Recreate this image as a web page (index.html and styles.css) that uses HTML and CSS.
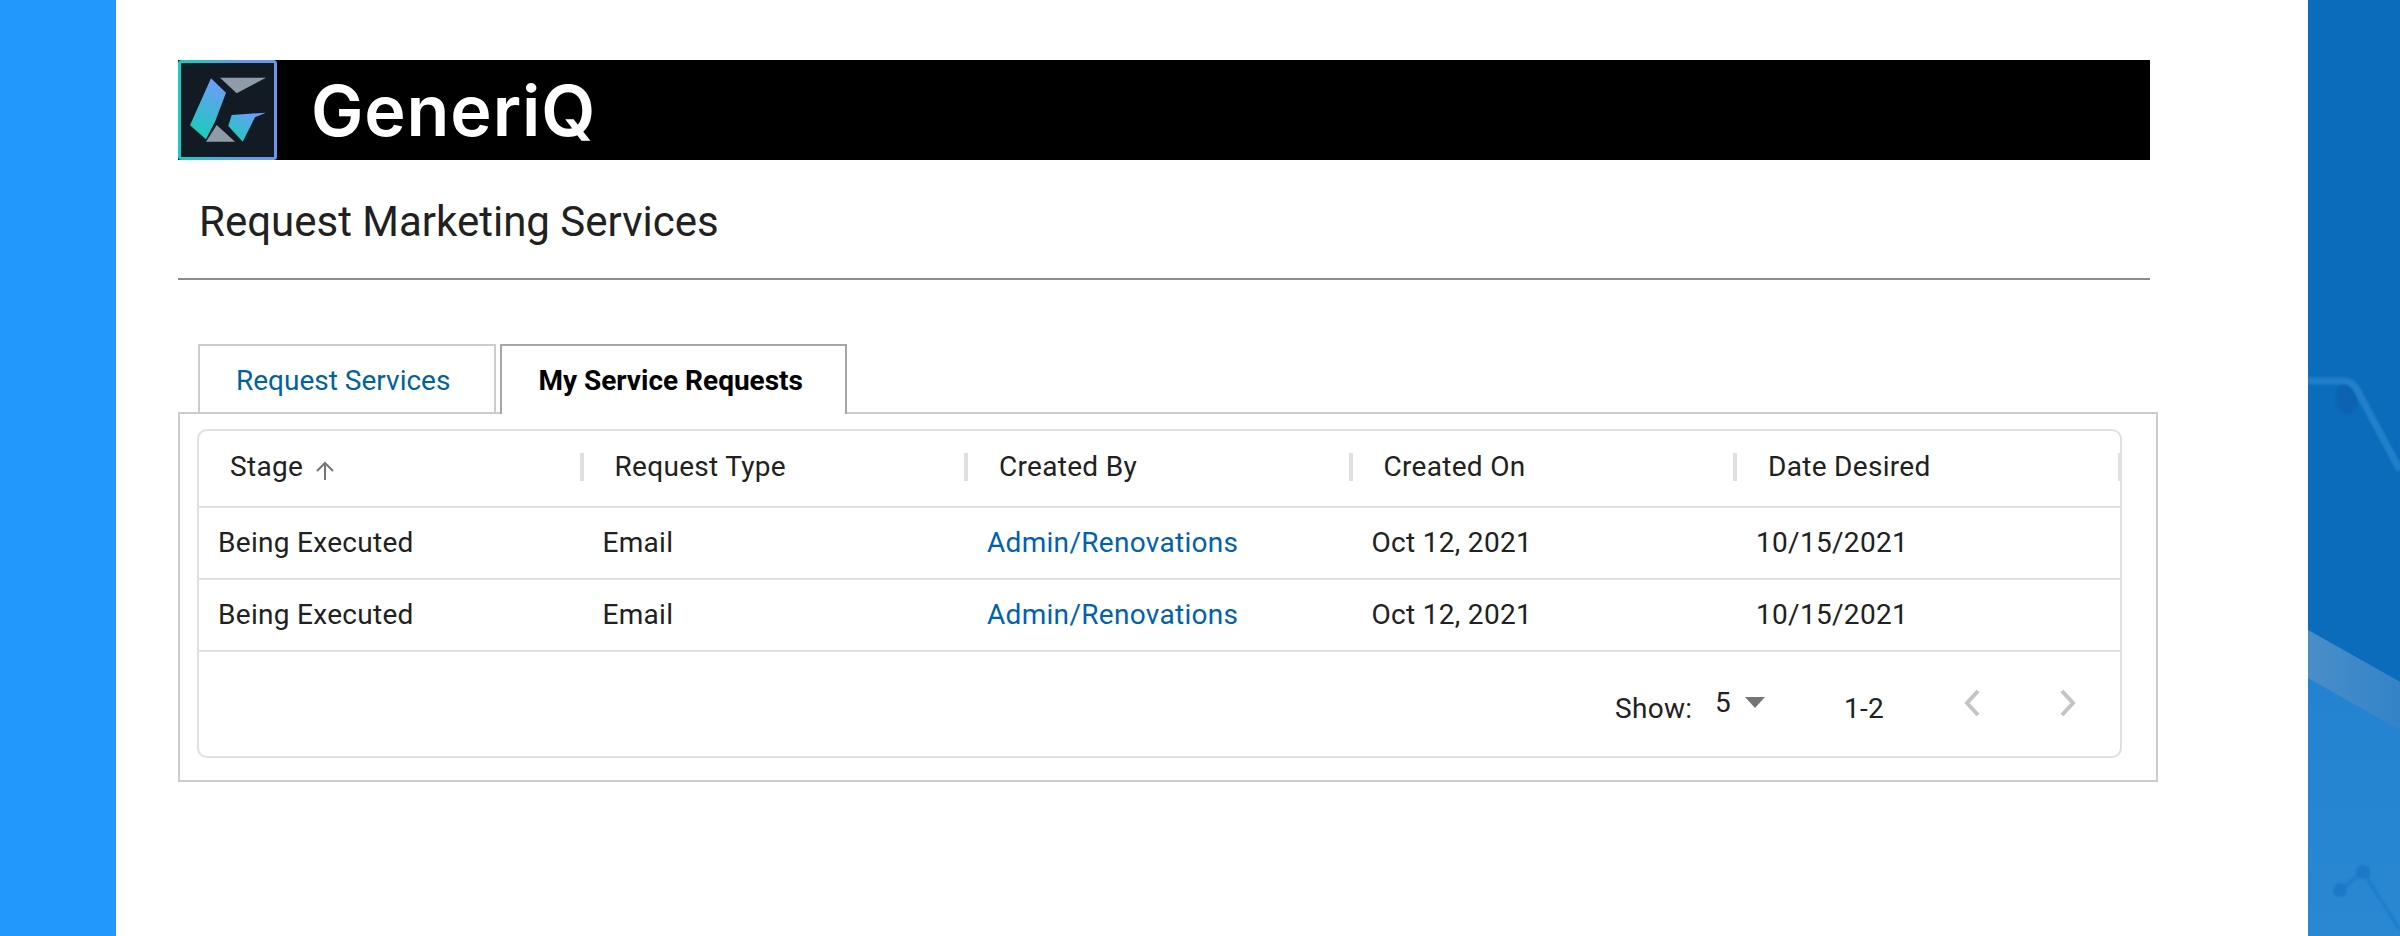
FILE: index.html
```html
<!DOCTYPE html>
<html lang="en">
<head>
<meta charset="utf-8">
<title>Request Marketing Services</title>
<link rel="stylesheet" href="styles.css">
</head>
<body>
<div class="side side-left"></div>
<main class="page">
  <header class="banner">
    <svg class="logo" viewBox="0 0 99 100" width="99" height="100" aria-hidden="true">
      <defs>
        <linearGradient id="edge" x1="0" y1="0" x2="1" y2="0">
          <stop offset="0.1" stop-color="#1fc8c0"/>
          <stop offset="0.7" stop-color="#6a96f0"/>
        </linearGradient>
        <linearGradient id="fillG" gradientUnits="userSpaceOnUse" x1="42" y1="24" x2="22" y2="72">
          <stop offset="0" stop-color="#6e9cf8"/>
          <stop offset="1" stop-color="#1fc9bf"/>
        </linearGradient>
        <linearGradient id="fillH" gradientUnits="userSpaceOnUse" x1="76" y1="52" x2="58" y2="80">
          <stop offset="0" stop-color="#6e9cf8"/>
          <stop offset="1" stop-color="#1fc9bf"/>
        </linearGradient>
      </defs>
      <rect x="1.5" y="1.5" width="96" height="97" rx="2" fill="#121a24" stroke="url(#edge)" stroke-width="3"/>
      <polygon points="42,17.7 88,17.7 58.7,33.3" fill="#8f9ca8"/>
      <polygon points="33,18.3 48,32.7 37,61.7 28,79.3 12,65.3" fill="url(#fillG)"/>
      <polygon points="38.7,65 57,81.7 28,81.7" fill="#8f9ca8"/>
      <polygon points="53.7,55 88,52.7 77,57.3 64.7,81.7 50.3,66" fill="url(#fillH)"/>
    </svg>
    <span class="brand">GeneriQ</span>
  </header>
  <h1 class="title">Request Marketing Services</h1>
  <hr class="rule">
  <nav class="tabs">
    <a class="tab">Request Services</a>
    <a class="tab tab-active">My Service Requests</a>
  </nav>
  <section class="panel">
    <div class="card">
      <div class="row head">
        <div class="th">Stage <svg class="sort" viewBox="0 0 20 20" width="20" height="20" aria-hidden="true"><path d="M10 19V2M2 10l8-8 8 8" fill="none" stroke="#757575" stroke-width="2"/></svg></div>
        <div class="th">Request Type</div>
        <div class="th">Created By</div>
        <div class="th">Created On</div>
        <div class="th">Date Desired</div>
      </div>
      <div class="row body">
        <div class="td">Being Executed</div>
        <div class="td">Email</div>
        <div class="td link">Admin/Renovations</div>
        <div class="td">Oct 12, 2021</div>
        <div class="td">10/15/2021</div>
      </div>
      <div class="row body">
        <div class="td">Being Executed</div>
        <div class="td">Email</div>
        <div class="td link">Admin/Renovations</div>
        <div class="td">Oct 12, 2021</div>
        <div class="td">10/15/2021</div>
      </div>
      <div class="pager">
        <span class="show">Show:</span>
        <span class="size">5</span>
        <svg class="caret" viewBox="0 0 20 12" width="22" height="12" aria-hidden="true"><path d="M0 0h20L10 11z" fill="#757575"/></svg>
        <span class="range">1-2</span>
        <svg class="chev chev-prev" viewBox="0 0 16 28" width="16" height="28" aria-hidden="true"><path d="M14 2L3 14l11 12" fill="none" stroke="#c4c4c4" stroke-width="4"/></svg>
        <svg class="chev" viewBox="0 0 16 28" width="16" height="28" aria-hidden="true"><path d="M2 2l11 12L2 26" fill="none" stroke="#c4c4c4" stroke-width="4"/></svg>
      </div>
    </div>
  </section>
</main>
<div class="side side-right">
  <svg class="art" viewBox="0 0 92 936" preserveAspectRatio="none" aria-hidden="true">
    <defs>
      <linearGradient id="floor" x1="0" y1="0" x2="0" y2="1">
        <stop offset="0" stop-color="#2282d0"/>
        <stop offset="1" stop-color="#2a88d2"/>
      </linearGradient>
      <linearGradient id="band" x1="0" y1="0" x2="1" y2="0">
        <stop offset="0" stop-color="#4a8ec8"/>
        <stop offset="1" stop-color="#3383c9"/>
      </linearGradient>
      <filter id="soft"><feGaussianBlur stdDeviation="0.9"/></filter>
    </defs>
    <polygon points="0,630 92,682 92,936 0,936" fill="url(#floor)"/>
    <polygon points="0,630 92,682 92,730 0,678" fill="url(#band)"/>
    <g filter="url(#soft)">
      <ellipse cx="39" cy="398" rx="11" ry="16" fill="#0a62b2"/>
      <path d="M0 381H36Q43 381 48 388L92 470" fill="none" stroke="#2380cb" stroke-width="7"/>
      <path d="M32 890L55 872L92 930" fill="none" stroke="#1c7ccb" stroke-width="3"/>
      <circle cx="32" cy="890" r="7" fill="#1a78c8"/>
      <circle cx="55" cy="872" r="7" fill="#1a78c8"/>
    </g>
  </svg>
</div>
</body>
</html>
```
FILE: styles.css
```css
* { box-sizing: border-box; }
html, body { margin: 0; height: 100%; }
body {
  display: flex;
  height: 936px;
  overflow: hidden;
  font-family: Roboto, "Liberation Sans", sans-serif;
  font-size: 28px;
  color: #212121;
  background: #fff;
}
.side { flex: none; height: 100%; }
.side-left { width: 116px; background: #2199fc; }
.side-right { width: 92px; background: #0a6cbb; }
.art { display: block; width: 100%; height: 100%; }
.page {
  flex: none;
  width: 2192px;
  padding: 60px 0 0 62px;
  background: #fff;
}
.banner {
  display: flex;
  align-items: center;
  width: 1972px;
  height: 100px;
  background: #000;
}
.logo { flex: none; display: block; }
.brand {
  margin-left: 34px;
  font-family: Inter, sans-serif;
  font-size: 70px;
  font-weight: 600;
  letter-spacing: 0.9px;
  color: #fff;
}
.title {
  margin: 0;
  padding: 38px 0 0 21px;
  height: 118px;
  font-size: 42px;
  line-height: 48px;
  font-weight: 400;
  color: #212121;
}
.rule {
  margin: 0;
  width: 1972px;
  height: 2px;
  border: 0;
  background: #8c8c8c;
}
.tabs {
  display: flex;
  gap: 4px;
  margin: 64px 0 0 20px;
  height: 70px;
  position: relative;
  z-index: 1;
}
.tab {
  display: flex;
  align-items: center;
  height: 68px;
  padding: 3px 44px 0 36px;
  border: 2px solid #ccc;
  border-bottom: 0;
  color: #00629f;
}
.tab-active {
  height: 70px;
  padding: 3px 42px 2px 36px;
  border-color: #a6a6a6;
  background: #fff;
  color: #000;
  font-weight: 700;
}
.panel {
  width: 1980px;
  height: 370px;
  margin-top: -2px;
  padding: 15px 0 0 17px;
  border: 2px solid #ccc;
}
.card {
  width: 1925px;
  height: 329px;
  border: 2px solid #e0e0e0;
  border-radius: 10px;
  letter-spacing: 0.3px;
}
.row {
  display: grid;
  grid-template-columns: repeat(5, 384.5px);
  border-bottom: 2px solid #e0e0e0;
}
.head { height: 77px; align-items: center; }
.body { height: 72px; align-items: center; padding-bottom: 1px; }
.th {
  display: flex;
  align-items: center;
  gap: 12px;
  height: 28px;
  padding-left: 31px;
  margin-top: -4px;
  border-right: 4px solid #e0e0e0;
}
.sort { margin-top: 8px; }
.td { padding-left: 19px; }
.link { color: #0061ad; }
.pager {
  display: flex;
  align-items: center;
  height: 104px;
  padding-left: 1416px;
}
.show { width: 100px; padding-top: 8px; }
.size { width: 28px; margin-top: -4px; }
.caret { margin: -2px 0 0 1px; }
.range { margin-left: 78px; width: 120px; padding-top: 8px; }
.chev { margin-top: -2px; }
.chev-prev { margin-right: 80px; }
```
